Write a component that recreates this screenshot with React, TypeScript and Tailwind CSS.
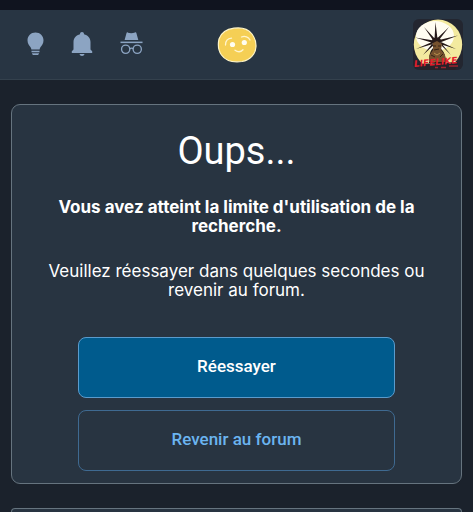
import React from "react";

function BulbIcon() {
  return (
    <svg viewBox="0 0 17 24" className="h-6 w-[17px]" fill="currentColor" aria-hidden="true">
      <path d="M8.500 0.500C3.900 0.500 0.500 4 0.500 8.300c0 3.300 1.600 5 2.900 6.700.7.900.8 1.800 1 2.500h8.200c.2-.7.300-1.600 1-2.500 1.300-1.700 2.900-3.400 2.900-6.700C16.500 4 13.100.5 8.500.5z" />
      <path d="M4.500 18.800h8v1.500h-8zM5 21.300h7c0 1.200-.8 1.800-1.800 1.800H6.800C5.800 23.100 5 22.500 5 21.300z" />
    </svg>
  );
}

function BellIcon() {
  return (
    <svg viewBox="0 0 22 24" className="h-6 w-[22px]" fill="currentColor" aria-hidden="true">
      <path d="M11 0c-1.200 0-2 .8-2 2v.3C5.200 3.100 2.500 6.200 2.500 10v7.500L.8 19.200V21h20.400v-1.800l-1.700-1.700V10c0-3.800-2.700-6.900-6.500-7.700V2c0-1.200-.8-2-2-2z" />
      <path d="M8.500 22h5c-.3 1.200-1.200 1.900-2.500 1.900S8.800 23.200 8.500 22z" />
    </svg>
  );
}

function IncognitoIcon() {
  return (
    <svg viewBox="0 0 24 24" className="size-[23px]" fill="currentColor" aria-hidden="true">
      <path d="M8.300.7C7.900.1 7.200.1 6.900.8L4.800 8.400h14.300L17 .8c-.2-.7-.9-.8-1.400-.4-2.300 1-4.900 1-7.300.3z" />
      <path d="M.5 10h23v1.600H.5z" />
      <g fill="none" stroke="currentColor" strokeWidth="1.400">
        <circle cx="5.900" cy="18" r="4.300" />
        <circle cx="18" cy="18" r="4.300" />
        <path d="M10.200 17.400c1.300-.8 2.300-.8 3.500 0" />
      </g>
    </svg>
  );
}

function SmileyLogo() {
  return (
    <svg viewBox="0 0 40 36" className="h-9 w-10" aria-hidden="true">
      <path d="M17 1.200C24 .2 31 2 35 7c2.500 3.500 4.200 7.500 4 12.500C38.700 27 33 33.300 25 34.500 17 35.500 9 34.500 4.500 28 1.300 23.500.8 17.500 2 12 4 6 10 2.200 17 1.200z" fill="#f5cf55" stroke="#fff5c7" strokeWidth="1.200" />
      <g fill="none" stroke="#fff5cd" strokeWidth="1.300" strokeLinecap="round">
        <path d="M8.500 18c0-4 2.500-6.500 6-6.800M24.500 10c3.500-1.500 7 0 8.500 3" />
        <path d="M18 23.200c2.700 2 5.800 2 8-.5" />
      </g>
      <circle cx="15.500" cy="17.500" r="2.600" fill="#fffdf0" />
      <circle cx="27.300" cy="15.500" r="2.600" fill="#fffdf0" />
    </svg>
  );
}

function Avatar() {
  return (
    <svg viewBox="0 0 50 51" className="h-[51px] w-[50px] rounded-md" aria-hidden="true">
      <rect width="50" height="51" fill="#232630" />
      <ellipse cx="25" cy="25.500" rx="24.200" ry="25" fill="#f3ea9f" />
      <ellipse cx="22" cy="17" rx="19" ry="15" fill="#fffdf1" />
      <g fill="#261a19">
        <path d="M22.500 3l2 17h-3zM11 8l12 13-2.500 1zM36 8L26 21l-2-1.500zM2 18.500l19 3-1 2.500zM45 16.500L27 23.500l-1-2.500zM3 30l16-7 1 2zM43 30L27 25l1-2zM10 36l9-11 2 1zM38 36l-10-10 1-1z" />
        <ellipse cx="23.500" cy="22" rx="4.500" ry="3.500" />
        <path d="M16 44c0-8 1-12 4-15h7c4 3 6 8 6 15z" />
      </g>
      <path d="M20 24l4-2 5 3-1 6 4 5v7H16v-6l4-6z" fill="#76522e" />
      <path d="M20 27h3M25 27h3M21 31l5-1M18 36l4 2M30 35l-3 3" stroke="#342316" strokeWidth="1" />
      <path d="M21 34l3 2 3-2" fill="none" stroke="#b88e4b" strokeWidth="1" />
      <path d="M5 45l40-2-3 8H8z" fill="#272128" />
      <text x="1" y="46" fill="#e71d2b" className="font-['DejaVu_Sans'] text-[9px] font-bold italic" transform="rotate(-5 25 44)">LIFELIKE</text>
      <path d="M22 48.500h3M28 48.500h5M36 47h9" stroke="#9d2630" strokeWidth="1.500" />
    </svg>
  );
}

export default function App() {
  return (
    <div className="flex min-h-screen flex-col bg-[#1b222c] font-[Inter,sans-serif] text-white">
      <div className="h-[10px] bg-[#10141f]" />
      <header className="grid h-[70px] grid-cols-3 items-center border-b border-[#34414d] bg-[#283543] px-[10px]">
        <nav className="flex items-center gap-[27px] pb-0.5 pl-[17px] text-[#8ca4c2]">
          <button type="button" aria-label="Thème"><BulbIcon /></button>
          <button type="button" aria-label="Notifications"><BellIcon /></button>
          <button type="button" aria-label="Navigation privée"><IncognitoIcon /></button>
        </nav>
        <a href="#accueil" aria-label="Accueil" className="justify-self-center"><SmileyLogo /></a>
        <button type="button" aria-label="Profil" className="justify-self-end"><Avatar /></button>
      </header>
      <main className="flex grow flex-col gap-6 px-[11px] pt-6">
        <section className="flex flex-col items-center rounded-[9px] border border-[#66747f] bg-[#283441] px-6 pt-6 pb-3 text-center">
          <h1 className="font-[Roboto,sans-serif] text-[38px] leading-[44px]">Oups...</h1>
          <p className="mt-[25px] text-[17px] leading-[19px] font-bold">
            Vous avez atteint la limite d'utilisation de la recherche.
          </p>
          <p className="mt-[26px] text-[17px] leading-[19px]">
            Veuillez réessayer dans quelques secondes ou revenir au forum.
          </p>
          <div className="mt-[37px] flex w-full flex-col gap-3 px-[42px] font-[Roboto,sans-serif] text-[17px] font-medium">
            <button type="button" className="h-[61px] rounded-lg border border-[#5a9bcc] bg-[#005b8d] pb-0.5">Réessayer</button>
            <button type="button" className="h-[61px] rounded-lg border border-[#3f6a91] pb-0.5 text-[#6bb4f0]">Revenir au forum</button>
          </div>
        </section>
        <section className="grow rounded-t-[9px] border border-b-0 border-[#66747f] bg-[#283441]" />
      </main>
    </div>
  );
}
